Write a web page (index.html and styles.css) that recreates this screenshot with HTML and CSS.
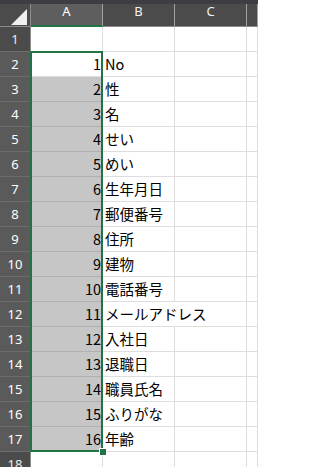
FILE: index.html
```html
<!DOCTYPE html>
<html lang="ja">
<head>
<meta charset="utf-8">
<title>Sheet</title>
<link rel="stylesheet" href="styles.css">
</head>
<body>
<div class="sheet">
  <div class="topbar"></div>
  <div class="row head">
    <div class="corner"><svg class="tri" width="30" height="22" viewBox="0 0 30 22"><polygon points="11,21 27,21 27,5" fill="#f0f0f0"/></svg></div>
    <div class="ch sel">A</div>
    <div class="ch">B</div>
    <div class="ch">C</div>
    <div class="ch last"></div>
  </div>
  <div class="row"><div class="rh">1</div><div class="c"></div><div class="c"></div><div class="c"></div><div class="c"></div></div>
  <div class="row"><div class="rh sel">2</div><div class="c num">1</div><div class="c">No</div><div class="c"></div><div class="c"></div></div>
  <div class="row"><div class="rh sel">3</div><div class="c num fill">2</div><div class="c">性</div><div class="c"></div><div class="c"></div></div>
  <div class="row"><div class="rh sel">4</div><div class="c num fill">3</div><div class="c">名</div><div class="c"></div><div class="c"></div></div>
  <div class="row"><div class="rh sel">5</div><div class="c num fill">4</div><div class="c">せい</div><div class="c"></div><div class="c"></div></div>
  <div class="row"><div class="rh sel">6</div><div class="c num fill">5</div><div class="c">めい</div><div class="c"></div><div class="c"></div></div>
  <div class="row"><div class="rh sel">7</div><div class="c num fill">6</div><div class="c">生年月日</div><div class="c"></div><div class="c"></div></div>
  <div class="row"><div class="rh sel">8</div><div class="c num fill">7</div><div class="c">郵便番号</div><div class="c"></div><div class="c"></div></div>
  <div class="row"><div class="rh sel">9</div><div class="c num fill">8</div><div class="c">住所</div><div class="c"></div><div class="c"></div></div>
  <div class="row"><div class="rh sel">10</div><div class="c num fill">9</div><div class="c">建物</div><div class="c"></div><div class="c"></div></div>
  <div class="row"><div class="rh sel">11</div><div class="c num fill">10</div><div class="c">電話番号</div><div class="c"></div><div class="c"></div></div>
  <div class="row"><div class="rh sel">12</div><div class="c num fill">11</div><div class="c spill">メールアドレス</div><div class="c"></div><div class="c"></div></div>
  <div class="row"><div class="rh sel">13</div><div class="c num fill">12</div><div class="c">入社日</div><div class="c"></div><div class="c"></div></div>
  <div class="row"><div class="rh sel">14</div><div class="c num fill">13</div><div class="c">退職日</div><div class="c"></div><div class="c"></div></div>
  <div class="row"><div class="rh sel">15</div><div class="c num fill">14</div><div class="c">職員氏名</div><div class="c"></div><div class="c"></div></div>
  <div class="row"><div class="rh sel">16</div><div class="c num fill">15</div><div class="c">ふりがな</div><div class="c"></div><div class="c"></div></div>
  <div class="row"><div class="rh sel">17</div><div class="c num fill">16</div><div class="c">年齢</div><div class="c"></div><div class="c"></div></div>
  <div class="row"><div class="rh">18</div><div class="c"></div><div class="c"></div><div class="c"></div><div class="c"></div></div>
  <div class="selection"><div class="handle"></div></div>
</div>
</body>
</html>
```
FILE: styles.css
```css
html, body {
  margin: 0;
  padding: 0;
  background: #ffffff;
  overflow: hidden;
}

.sheet {
  position: relative;
  width: 258px;
  height: 467px;
  overflow: hidden;
  font-family: "Noto Sans CJK JP", "Noto Sans", sans-serif;
}

.topbar {
  height: 4px;
  background: #3d3e42;
}

.row {
  display: grid;
  grid-template-columns: 31px 72px 72px 72px 1fr;
  height: 25px;
}

.row.head {
  height: 23px;
}

.row > div {
  box-sizing: border-box;
  min-width: 0;
}

.corner {
  background: #4b4b4b;
  border-right: 1px solid #8c8c8c;
  border-bottom: 1px solid #8c8c8c;
}

.tri {
  display: block;
}

.ch {
  background: #4b4b4b;
  color: #f2f2f2;
  border-right: 1px solid #a3a3a3;
  border-bottom: 1px solid #8c8c8c;
  text-align: center;
  font-family: "Noto Sans", sans-serif;
  font-size: 13px;
  line-height: 15px;
}

.ch.sel {
  background: #5e5e5e;
  color: #ffffff;
  border-bottom: 2px solid #217346;
}

.rh {
  background: #4b4b4b;
  color: #ececec;
  border-right: 1px solid #8c8c8c;
  border-bottom: 1px solid #6c6c6c;
  text-align: center;
  font-family: "Noto Sans", sans-serif;
  font-size: 13px;
  line-height: 24px;
}

.rh.sel {
  background: #5a5a5a;
  color: #ffffff;
}

.c {
  border-right: 1px solid #dedede;
  border-bottom: 1px solid #dedede;
  color: #000000;
  font-size: 14.5px;
  line-height: 24px;
  white-space: nowrap;
  padding-left: 2px;
}

.c.num {
  text-align: right;
  padding-left: 0;
  padding-right: 1px;
}

.c.fill {
  background: #c6c6c6;
  border-bottom-color: #b0b0b0;
}

.c.spill {
  border-right-color: #ffffff;
}

.selection {
  position: absolute;
  left: 30px;
  top: 51px;
  width: 73px;
  height: 401px;
  box-sizing: border-box;
  border: 2px solid #217346;
  pointer-events: none;
}

.handle {
  position: absolute;
  left: 68px;
  top: 396px;
  width: 6px;
  height: 6px;
  background: #217346;
  box-shadow: 0 0 0 1px #ffffff;
}
```
